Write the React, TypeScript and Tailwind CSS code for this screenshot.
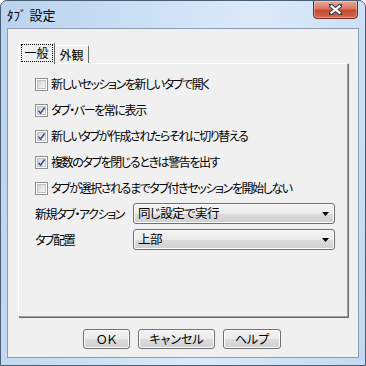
import { ReactNode } from "react"

const font = "font-['Noto_Sans_CJK_JP',sans-serif] [font-feature-settings:'palt']"

const options = [
  { label: "新しいセッションを新しいタブで開く", checked: false },
  { label: "タブ・バーを常に表示", checked: true },
  { label: "新しいタブが作成されたらそれに切り替える", checked: true },
  { label: "複数のタブを閉じるときは警告を出す", checked: true },
  { label: "タブが選択されるまでタブ付きセッションを開始しない", checked: false },
]

function Checkbox({ checked }: { checked: boolean }) {
  return (
    <div className="w-[13px] h-[13px] shrink-0 border border-[#8e8f8f] bg-white p-px">
      <div className="relative w-full h-full border border-[#c4c4c4] bg-gradient-to-br from-[#d3d3d3] to-[#f8f8f8]">
        {checked && (
          <svg viewBox="0 0 9 9" className="absolute -left-px -top-px w-[9px] h-[9px]">
            <path d="M1.5 4.8 L3.6 7.2 L7.6 1.6" fill="none" stroke="#3b57a3" strokeWidth="1.7" />
          </svg>
        )}
      </div>
    </div>
  )
}

function Combo({ value }: { value: string }) {
  return (
    <div className="w-[202px] h-[21px] flex items-center justify-between pl-[4px] pr-[5px] border border-[#707070] rounded-[3px] bg-[linear-gradient(#f2f2f2_0%,#ebebeb_50%,#dddddd_51%,#cfcfcf_100%)] shadow-[inset_0_0_0_1px_#fcfcfc]">
      <span className="text-[12.5px] leading-none text-black tracking-[-0.6px]">{value}</span>
      <svg viewBox="0 0 7 4" className="w-[7px] h-[4px]">
        <path d="M0 0 H7 L3.5 4 Z" fill="#000" />
      </svg>
    </div>
  )
}

function Button({ children, width }: { children: ReactNode; width: string }) {
  return (
    <div
      className={`${width} h-[20px] flex items-center justify-center border border-[#707070] rounded-[3px] bg-[linear-gradient(#f2f2f2_0%,#ebebeb_50%,#dddddd_51%,#cfcfcf_100%)] shadow-[inset_0_0_0_1px_#fcfcfc] text-[12px] leading-none text-black`}
    >
      {children}
    </div>
  )
}

export default function App() {
  return (
    <div className={`${font} w-[366px] h-[366px] flex flex-col border border-[#4b5d73] rounded-t-[7px] bg-[linear-gradient(100deg,#bad3ee_0%,#cfe2f6_40%,#dcebfa_60%,#c3d9f1_100%)] overflow-hidden`}>
      {/* Title bar */}
      <div className="h-[27px] shrink-0 flex items-start justify-between pl-[6px] pr-[7px]">
        <span className="mt-[6px] text-[13px] leading-[16px] text-black">ﾀﾌﾞ 設定</span>
        <div className="w-[45px] h-[19px] -mt-px flex items-center justify-center border border-[#6b2b24] rounded-b-[4px] bg-[linear-gradient(#e9a898_0%,#d9775f_45%,#c44a31_55%,#cf6a4f_100%)] shadow-[inset_0_0_0_1px_rgba(255,255,255,0.35)]">
          <svg viewBox="0 0 12 10" className="w-[13px] h-[11px]">
            <path
              d="M1 1 L11 9 M11 1 L1 9"
              stroke="#3a3a4a"
              strokeWidth="4"
              strokeLinecap="round"
            />
            <path d="M1.5 1.5 L10.5 8.5 M10.5 1.5 L1.5 8.5" stroke="#fff" strokeWidth="2" />
          </svg>
        </div>
      </div>

      {/* Client area */}
      <div className="flex-1 mx-[6px] mb-[7px] border border-[#8a9bb0] bg-[#f0f0f0] flex flex-col pt-[13px] pl-[10px] pr-[10px]">
        {/* Tabs */}
        <div className="flex items-end h-[21px] text-[12px] text-black">
          <div className="relative z-10 w-[37px] h-[22px] -mb-px bg-[#f0f0f0] border-t border-l border-white border-r border-r-[#696969] rounded-t-[2px] flex items-start justify-center pt-[1px]">
            <div className="w-[32px] h-[18px] border border-dotted border-black flex items-center justify-center leading-none">
              一般
            </div>
          </div>
          <div className="w-[34px] h-[18px] bg-[#f0f0f0] border-t border-white border-r border-r-[#696969] rounded-t-[2px] flex items-center justify-center leading-none">
            外観
          </div>
        </div>

        {/* Panel */}
        <div className="h-[254px] border-t border-l border-white border-r border-b border-r-[#a0a0a0] border-b-[#a0a0a0] shadow-[1px_1px_0_#696969] pt-[7px] pl-[16px]">
          {options.map((o) => (
            <div key={o.label} className="h-[26px] flex items-center gap-[3px]">
              <Checkbox checked={o.checked} />
              <span className="text-[12px] leading-none text-black whitespace-nowrap tracking-[-1.4px]">{o.label}</span>
            </div>
          ))}
          <div className="mt-[2px] flex flex-col gap-[5px]">
            <div className="flex items-center">
              <span className="w-[98px] text-[12px] leading-none text-black whitespace-nowrap tracking-[-1.4px]">新規タブ・アクション</span>
              <Combo value="同じ設定で実行" />
            </div>
            <div className="flex items-center">
              <span className="w-[98px] text-[12px] leading-none text-black whitespace-nowrap tracking-[-1.4px]">タブ配置</span>
              <Combo value="上部" />
            </div>
          </div>
        </div>

        {/* Buttons */}
        <div className="mt-[12px] flex justify-center gap-[8px] pr-[2px]">
          <Button width="w-[47px]">ＯＫ</Button>
          <Button width="w-[77px]">キャンセル</Button>
          <Button width="w-[58px]">ヘルプ</Button>
        </div>
      </div>
    </div>
  )
}
